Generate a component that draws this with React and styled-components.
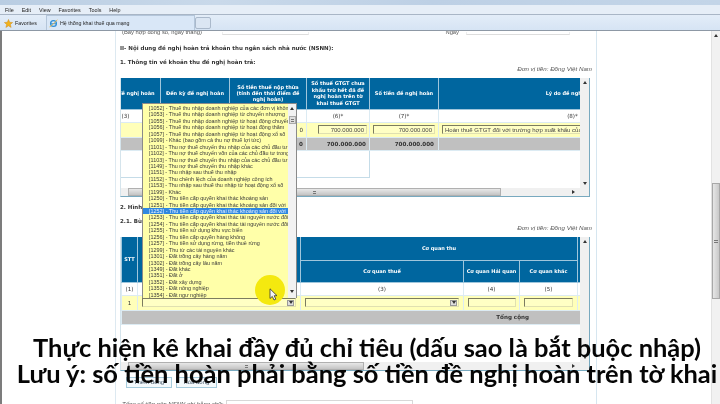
import React from 'react';
import styled, { createGlobalStyle } from 'styled-components';

const GlobalStyle = createGlobalStyle`
  html, body { margin: 0; padding: 0; background: #fff; }
  body { font-family: "Liberation Sans", Arial, sans-serif; }
`;

const Screen = styled.div`
  position: relative;
  width: 720px;
  height: 404px;
  overflow: hidden;
  background: #fff;
  display: flex;
  flex-direction: column;
  filter: blur(0.35px);
`;

const TitleBar = styled.div`
  height: 5px;
  flex: none;
  background: linear-gradient(90deg, #b9cde2, #c9d9ea 30%, #bdd0e5 60%, #c3d5e8);
`;

const MenuBar = styled.div`
  height: 9px;
  flex: none;
  display: flex;
  align-items: center;
  gap: 8px;
  padding-left: 5px;
  background: #e6eef7;
  border-bottom: 1px solid #a9b6c6;
  font-size: 5.4px;
  color: #222;
`;

const TabBar = styled.div`
  height: 15px;
  flex: none;
  display: flex;
  align-items: flex-end;
  background: linear-gradient(#e3edf8, #d6e4f4);
  border-bottom: 1px solid #8d98a5;
  font-size: 5.3px;
  color: #222;
`;

const FavoritesButton = styled.div`
  width: 46px;
  height: 14px;
  display: flex;
  align-items: center;
  gap: 2px;
  padding-left: 4px;
  box-sizing: border-box;
`;

const ActiveTab = styled.div`
  width: 149px;
  height: 15px;
  display: flex;
  align-items: center;
  gap: 2px;
  padding-left: 2px;
  box-sizing: border-box;
  background: #d9e7f7;
  border: 1px solid #b4c6da;
  border-bottom: none;
`;

const NewTab = styled.div`
  width: 16px;
  height: 12px;
  margin-bottom: 1px;
  box-sizing: border-box;
  background: #dbe6f3;
  border: 1px solid #aab9cb;
  border-radius: 2px;
`;

const Body = styled.div`
  flex: 1;
  display: flex;
  min-height: 0;
`;

const LeftGutter = styled.div`
  width: 113px;
  flex: none;
  border-left: 2px solid #7c7c7c;
`;

const Page = styled.div`
  width: 482px;
  flex: none;
  box-sizing: border-box;
  padding-left: 4px;
  border-left: 1px solid #dde9f1;
  border-right: 1px solid #d6e6f0;
  overflow: hidden;
`;

const RightGutter = styled.div`
  flex: 1;
`;

const WindowScroll = styled.div`
  width: 8px;
  flex: none;
  display: flex;
  flex-direction: column;
  align-items: center;
  background: #f1f1f1;
  border-left: 1px solid #e2e2e2;
  padding-top: 3px;
`;

const WindowThumb = styled.div`
  width: 8px;
  height: 116px;
  margin-top: 146px;
  display: flex;
  align-items: center;
  justify-content: center;
  background: linear-gradient(90deg, #e6e6e6, #c9c9c9);
  border: 1px solid #a8a8a8;
  box-sizing: border-box;
`;

const Grip = styled.div`
  width: ${p => (p.$wide ? 4 : 3)}px;
  height: 3px;
  border-top: 1px solid #777;
  border-bottom: 1px solid #777;
  box-sizing: border-box;
`;

const Arrow = styled.div`
  width: 0;
  height: 0;
  flex: none;
  border-left: 2px solid transparent;
  border-right: 2px solid transparent;
  ${p => (p.$down ? 'border-top: 3px solid #333;' : 'border-bottom: 3px solid #333;')}
`;

const TopFragment = styled.div`
  height: 4px;
  overflow: hidden;
  display: flex;
  align-items: flex-end;
  font-size: 5.8px;
  line-height: 6px;
  color: #555;
`;

const FragmentLabel = styled.div`
  width: ${p => p.$w}px;
  flex: none;
  box-sizing: border-box;
  padding-left: 2px;
  text-align: ${p => p.$align || 'left'};
  white-space: nowrap;
`;

const FragmentInput = styled.div`
  width: ${p => p.$w}px;
  flex: none;
  margin-left: ${p => p.$ml || 0}px;
  height: 3px;
  box-sizing: border-box;
  border-bottom: 1px solid #ddd;
  border-left: 1px solid #eee;
  border-right: 1px solid #eee;
`;

const Heading = styled.div`
  font-family: "DejaVu Sans", sans-serif;
  font-weight: 700;
  font-size: 5.5px;
  line-height: 8px;
  height: ${p => p.$h || 8}px;
  margin-top: ${p => p.$mt}px;
  color: #333;
  white-space: nowrap;
`;

const UnitNote = styled.div`
  width: 472px;
  height: 8px;
  line-height: 8px;
  text-align: right;
  font-size: 6.2px;
  font-style: italic;
  color: #555;
`;

const Panel = styled.div`
  width: 470px;
  height: ${p => p.$h}px;
  margin-top: 5px;
  display: flex;
  flex-direction: column;
  box-sizing: border-box;
  border-right: 1px solid #78a9bf;
  border-bottom: 1px solid #78a9bf;
  border-left: 1px solid #d5e4ec;
`;

const PanelMain = styled.div`
  flex: 1;
  min-height: 0;
  display: flex;
`;

const Viewport = styled.div`
  width: 459px;
  flex: none;
  overflow: hidden;
`;

const VScroll = styled.div`
  flex: 1;
  display: flex;
  flex-direction: column;
  align-items: center;
  justify-content: space-between;
  padding: 3px 0;
  background: #f0f0f0;
`;

const HScroll = styled.div`
  height: 8px;
  flex: none;
  display: flex;
  align-items: center;
  background: #f0f0f0;
`;

const HThumb = styled.div`
  width: ${p => p.$w}px;
  height: 8px;
  flex: none;
  margin-left: 7px;
  display: flex;
  align-items: center;
  justify-content: center;
  box-sizing: border-box;
  background: linear-gradient(#e8e8e8, #c4c4c4);
  border: 1px solid #b0b0b0;
`;

const SideArrow = styled.div`
  width: 0;
  height: 0;
  margin-left: auto;
  margin-right: 14px;
  border-top: 2px solid transparent;
  border-bottom: 2px solid transparent;
  border-left: 3px solid #333;
`;

const Table = styled.table`
  table-layout: fixed;
  border-collapse: collapse;
  width: ${p => p.$w}px;
  margin-left: ${p => p.$scroll || 0}px;
  font-size: 6.2px;
  color: #333;
`;

const HeadRow = styled.tr`
  height: ${p => p.$h}px;
`;

const HeadCell = styled.th`
  padding: 0;
  background: #00669f;
  color: #fff;
  font-family: "DejaVu Sans", sans-serif;
  font-size: 5px;
  line-height: 6.4px;
  font-weight: 700;
  text-align: center;
  border: 1px solid #9fc6dc;
  border-top: none;
  overflow: hidden;
  white-space: ${p => (p.$wrap ? 'normal' : 'nowrap')};
`;

const BodyRow = styled.tr`
  height: ${p => p.$h}px;
  background: ${p => p.$bg || '#fff'};
`;

const Cell = styled.td`
  padding: 0 ${p => p.$pad || 0}px;
  border: 1px solid ${p => p.$line || '#dcebf3'};
  text-align: ${p => p.$align || 'center'};
  font-family: "DejaVu Sans", sans-serif;
  font-size: 5.6px;
  font-weight: ${p => (p.$bold ? 700 : 400)};
  overflow: hidden;
  white-space: nowrap;
  color: #333;
`;

const OpenCell = styled.td`
  padding: 0;
  border: none;
`;

const Field = styled.div`
  height: 9px;
  margin: 0 ${p => p.$mr || 0}px 0 ${p => p.$ml || 0}px;
  display: flex;
  align-items: center;
  justify-content: ${p => (p.$left ? 'flex-start' : 'flex-end')};
  box-sizing: border-box;
  padding: 0 2px;
  background: #ffffc4;
  border-top: 1px solid #7c7c60;
  border-left: 1px solid #7c7c60;
  border-right: 1px solid #e0e0b0;
  border-bottom: 1px solid #e0e0b0;
  font-family: "Liberation Sans", sans-serif;
  font-size: 6px;
  color: #444;
  white-space: nowrap;
  overflow: hidden;
`;

const DropButton = styled.div`
  width: 7px;
  height: 6px;
  margin-right: -1px;
  margin-left: auto;
  display: flex;
  align-items: center;
  justify-content: center;
  background: #ddd;
  border: 1px solid #999;
  box-sizing: border-box;
`;

const ButtonRow = styled.div`
  display: flex;
  gap: 4px;
  margin: 6px 0 0 6px;
`;

const ActionButton = styled.div`
  width: ${p => p.$w}px;
  height: 11px;
  box-sizing: border-box;
  border: 1px solid #a5cbdc;
  background: #f4fafd;
  font-size: 6px;
  line-height: 9px;
  text-align: center;
  color: #456;
`;

const TotalRow = styled.div`
  display: flex;
  align-items: flex-start;
  gap: 2px;
  margin: 12px 0 0 2px;
  font-size: 6px;
  line-height: 9px;
  font-style: italic;
  color: #555;
`;

const TotalInput = styled.div`
  width: 185px;
  height: 12px;
  flex: none;
  border: 1px solid #d8d8d8;
`;

const DropList = styled.div`
  position: absolute;
  left: 142px;
  top: 103px;
  width: 155px;
  height: 195px;
  box-sizing: border-box;
  display: flex;
  background: #ffffa9;
  border: 1px solid #8a8a8a;
  border-bottom: none;
  overflow: hidden;
`;

const DropItems = styled.div`
  flex: 1;
  min-width: 0;
  padding-top: 1px;
`;

const DropItem = styled.div`
  height: 6.45px;
  line-height: 6.45px;
  padding-left: 6px;
  font-size: 5.45px;
  white-space: nowrap;
  overflow: hidden;
  color: ${p => (p.$active ? '#e8f2ff' : '#3a3a3a')};
  background: ${p => (p.$active ? '#2f87e0' : 'transparent')};
`;

const DropScroll = styled.div`
  width: 8px;
  flex: none;
  display: flex;
  flex-direction: column;
  align-items: center;
  padding: 3px 0;
  background: #f2f2f2;
`;

const DropThumb = styled.div`
  width: 7px;
  height: 8px;
  margin-top: 6px;
  display: flex;
  align-items: center;
  justify-content: center;
  box-sizing: border-box;
  background: #dedede;
  border: 1px solid #aaa;
`;

const DropBottomArrow = styled.div`
  margin-top: auto;
  margin-bottom: 2px;
`;

const Highlight = styled.div`
  position: absolute;
  left: 255px;
  top: 275px;
  width: 30px;
  height: 30px;
  border-radius: 50%;
  background: #f4e90f;
`;

const Pointer = styled.svg`
  position: absolute;
  left: 269px;
  top: 288px;
`;

const Caption = styled.div`
  position: absolute;
  left: 14px;
  right: 0;
  top: 334px;
  text-align: center;
  font-family: "Lato", "Noto Sans", sans-serif;
  font-weight: 700;
  font-size: 25.45px;
  line-height: 26px;
  color: #050505;
  white-space: nowrap;
`;

const ITEMS = [
  '[1052] - Thuế thu nhập doanh nghiệp của các đơn vị không',
  '[1053] - Thuế thu nhập doanh nghiệp từ chuyển nhượng',
  '[1055] - Thuế thu nhập doanh nghiệp từ hoạt động chuyển',
  '[1056] - Thuế thu nhập doanh nghiệp từ hoạt động thăm',
  '[1057] - Thuế thu nhập doanh nghiệp từ hoạt động xổ số',
  '[1099] - Khác (bao gồm cả thu nợ thuế lợi tức)',
  '[1101] - Thu nợ thuế chuyển thu nhập của các chủ đầu tư',
  '[1102] - Thu nợ thuế chuyển vốn của các chủ đầu tư trong',
  '[1103] - Thu nợ thuế chuyển thu nhập của các chủ đầu tư',
  '[1149] - Thu nợ thuế chuyển thu nhập khác',
  '[1151] - Thu nhập sau thuế thu nhập',
  '[1152] - Thu chênh lệch của doanh nghiệp công ích',
  '[1153] - Thu nhập sau thuế thu nhập từ hoạt động xổ số',
  '[1199] - Khác',
  '[1250] - Thu tiền cấp quyền khai thác khoáng sản',
  '[1251] - Thu tiền cấp quyền khai thác khoáng sản đối với',
  '[1252] - Thu tiền cấp quyền khai thác khoáng sản đối với',
  '[1253] - Thu tiền cấp quyền khai thác tài nguyên nước đối',
  '[1254] - Thu tiền cấp quyền khai thác tài nguyên nước đối',
  '[1255] - Thu tiền sử dụng khu vực biển',
  '[1256] - Thu tiền cấp quyền hàng không',
  '[1257] - Thu tiền sử dụng rừng, tiền thuê rừng',
  '[1299] - Thu từ các tài nguyên khác',
  '[1301] - Đất trồng cây hàng năm',
  '[1302] - Đất trồng cây lâu năm',
  '[1349] - Đất khác',
  '[1351] - Đất ở',
  '[1352] - Đất xây dựng',
  '[1353] - Đất nông nghiệp',
  '[1354] - Đất ngư nghiệp',
];

const MENU = ['File', 'Edit', 'View', 'Favorites', 'Tools', 'Help'];
const YELLOW = '#ffffb9';
const GRAY = '#c0c0c0';

function RefundTable() {
  return (
    <Table $w={616} $scroll={-31}>
      <colgroup>
        <col width="70" /><col width="69" /><col width="77" /><col width="63" /><col width="69" /><col width="268" />
      </colgroup>
      <tbody>
        <HeadRow $h={31}>
          <HeadCell>Số tiền đề nghị hoàn</HeadCell>
          <HeadCell>Đến kỳ đề nghị hoàn</HeadCell>
          <HeadCell $wrap>Số tiền thuế nộp thừa (tính đến thời điểm đề nghị hoàn)</HeadCell>
          <HeadCell $wrap>Số thuế GTGT chưa khấu trừ hết đã đề nghị hoàn trên tờ khai thuế GTGT</HeadCell>
          <HeadCell>Số tiền đề nghị hoàn</HeadCell>
          <HeadCell>Lý do đề nghị hoàn</HeadCell>
        </HeadRow>
        <BodyRow $h={13}>
          <Cell>(3)</Cell>
          <Cell /><Cell />
          <Cell>(6)*</Cell>
          <Cell>(7)*</Cell>
          <Cell>(8)*</Cell>
        </BodyRow>
        <BodyRow $h={15} $bg={YELLOW}>
          <Cell /><Cell />
          <Cell $align="right" $pad={3}>0</Cell>
          <Cell><Field $ml={11} $mr={2}>700.000.000</Field></Cell>
          <Cell><Field $ml={3} $mr={3}>700.000.000</Field></Cell>
          <Cell><Field $left $ml={3} $mr={2}>Hoàn thuế GTGT đối với trường hợp xuất khẩu của CSKD trong khu chế xuất</Field></Cell>
        </BodyRow>
        <BodyRow $h={13} $bg={GRAY}>
          <Cell /><Cell />
          <Cell $align="right" $pad={3} $bold>0</Cell>
          <Cell $align="right" $pad={3} $bold>700.000.000</Cell>
          <Cell $align="right" $pad={4} $bold>700.000.000</Cell>
          <Cell />
        </BodyRow>
        <BodyRow $h={27}>
          <Cell colSpan={4} $line="#c5dce8" />
          <OpenCell /><OpenCell />
        </BodyRow>
      </tbody>
    </Table>
  );
}

function AgencyTable() {
  return (
    <Table $w={469}>
      <colgroup>
        <col width="16" /><col width="163" /><col width="163" /><col width="56" /><col width="58" /><col width="13" />
      </colgroup>
      <tbody>
        <HeadRow $h={23}>
          <HeadCell rowSpan={2}>STT</HeadCell>
          <HeadCell rowSpan={2} />
          <HeadCell colSpan={3}>Cơ quan thu</HeadCell>
          <HeadCell rowSpan={2} />
        </HeadRow>
        <HeadRow $h={22}>
          <HeadCell>Cơ quan thuế</HeadCell>
          <HeadCell>Cơ quan Hải quan</HeadCell>
          <HeadCell>Cơ quan khác</HeadCell>
        </HeadRow>
        <BodyRow $h={13}>
          <Cell>(1)</Cell>
          <Cell />
          <Cell>(3)</Cell>
          <Cell>(4)</Cell>
          <Cell>(5)</Cell>
          <Cell />
        </BodyRow>
        <BodyRow $h={15} $bg={YELLOW}>
          <Cell>1</Cell>
          <Cell>
            <Field $left $ml={4} $mr={4}>
              <DropButton><Arrow $down /></DropButton>
            </Field>
          </Cell>
          <Cell>
            <Field $left $ml={4} $mr={4}>
              <DropButton><Arrow $down /></DropButton>
            </Field>
          </Cell>
          <Cell><Field $ml={4} $mr={3} /></Cell>
          <Cell><Field $ml={4} $mr={4} /></Cell>
          <Cell><Field $ml={2} /></Cell>
        </BodyRow>
        <BodyRow $h={14} $bg={GRAY}>
          <Cell colSpan={6} $align="right" $pad={61} $bold>Tổng cộng</Cell>
        </BodyRow>
      </tbody>
    </Table>
  );
}

export default function App() {
  return (
    <Screen>
      <GlobalStyle />
      <TitleBar />
      <MenuBar>
        {MENU.map(m => <span key={m}>{m}</span>)}
      </MenuBar>
      <TabBar>
        <FavoritesButton>
          <svg width="9" height="9" viewBox="0 0 10 10">
            <path d="M5 0.5 6.3 3.6 9.6 3.9 7.1 6.1 7.9 9.4 5 7.6 2.1 9.4 2.9 6.1 0.4 3.9 3.7 3.6Z" fill="#f2b31c" stroke="#c9861a" strokeWidth="0.5" />
          </svg>
          Favorites
        </FavoritesButton>
        <ActiveTab>
          <svg width="9" height="9" viewBox="0 0 10 10">
            <circle cx="5" cy="5" r="3.2" fill="none" stroke="#2f8fd8" strokeWidth="1.5" />
            <path d="M2 5.2H8" stroke="#2f8fd8" strokeWidth="1" />
            <path d="M0.6 8.8C2.5 8 7 3.5 9.2 0.8" fill="none" stroke="#e6b02c" strokeWidth="0.9" />
          </svg>
          Hệ thống khai thuế qua mạng
        </ActiveTab>
        <NewTab />
      </TabBar>
      <Body>
        <LeftGutter />
        <Page>
          <TopFragment>
            <FragmentLabel $w={102}>(Bảy hợp đồng số, ngày tháng)</FragmentLabel>
            <FragmentInput $w={87} />
            <FragmentLabel $w={150} $align="right">Ngày</FragmentLabel>
            <FragmentInput $w={104} $ml={7} />
          </TopFragment>
          <Heading $mt={9}>II- Nội dung đề nghị hoàn trả khoản thu ngân sách nhà nước (NSNN):</Heading>
          <Heading $mt={6} $h={7}>1. Thông tin về khoản thu đề nghị hoàn trả:</Heading>
          <UnitNote>Đơn vị tiền: Đồng Việt Nam</UnitNote>
          <Panel $h={119}>
            <PanelMain>
              <Viewport><RefundTable /></Viewport>
              <VScroll><Arrow /><Arrow $down /></VScroll>
            </PanelMain>
            <HScroll>
              <HThumb $w={373}><Grip /></HThumb>
              <SideArrow />
            </HScroll>
          </Panel>
          <Heading $mt={6}>2. Hình thức hoàn trả:</Heading>
          <Heading $mt={6} $h={7}>2.1. Bù trừ cho các khoản phải nộp:</Heading>
          <UnitNote>Đơn vị tiền: Đồng Việt Nam</UnitNote>
          <Panel $h={134}>
            <PanelMain>
              <Viewport><AgencyTable /></Viewport>
              <VScroll><Arrow /><Arrow $down /></VScroll>
            </PanelMain>
            <HScroll>
              <HThumb $w={236}><Grip /></HThumb>
              <SideArrow />
            </HScroll>
          </Panel>
          <ButtonRow>
            <ActionButton $w={46}>Thêm dòng</ActionButton>
            <ActionButton $w={41}>Xóa dòng</ActionButton>
          </ButtonRow>
          <TotalRow>
            Tổng số tiền nộp NSNN ghi bằng chữ:
            <TotalInput />
          </TotalRow>
        </Page>
        <RightGutter />
        <WindowScroll>
          <Arrow />
          <WindowThumb><Grip $wide /></WindowThumb>
        </WindowScroll>
      </Body>
      <DropList>
        <DropItems>
          {ITEMS.map(item => (
            <DropItem key={item} $active={item.startsWith('[1252]')}>{item}</DropItem>
          ))}
        </DropItems>
        <DropScroll>
          <Arrow />
          <DropThumb><Grip /></DropThumb>
          <DropBottomArrow><Arrow $down /></DropBottomArrow>
        </DropScroll>
      </DropList>
      <Highlight />
      <Pointer width="9" height="13" viewBox="0 0 9 13">
        <path d="M1 0.8V10.5L3.3 8.4 5 12 6.8 11.2 5.2 7.7H8Z" fill="#f4f4f4" stroke="#333" strokeWidth="0.8" />
      </Pointer>
      <Caption>
        Thực hiện kê khai đầy đủ chỉ tiêu (dấu sao là bắt buộc nhập)<br />
        Lưu ý: số tiền hoàn phải bằng số tiền đề nghị hoàn trên tờ khai
      </Caption>
    </Screen>
  );
}
